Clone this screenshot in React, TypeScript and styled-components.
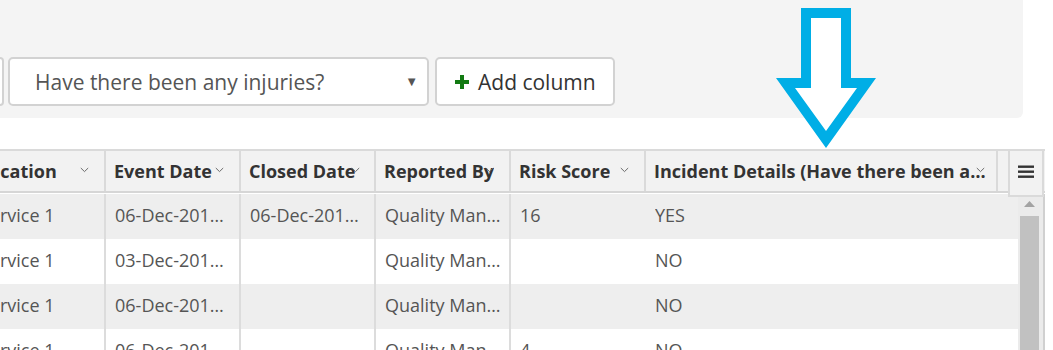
import React from "react";
import styled, { createGlobalStyle } from "styled-components";

const Global = createGlobalStyle`
  html, body { margin: 0; padding: 0; background: #ffffff; }
  body { font-family: "Open Sans", "Liberation Sans", sans-serif; }
  * { box-sizing: border-box; }
`;

const Page = styled.div`
  position: relative;
  width: 1053px;
  height: 350px;
  overflow: hidden;
  background: #ffffff;
`;

const Panel = styled.div`
  width: 1023px;
  height: 118px;
  background: #f4f4f4;
  border-bottom-right-radius: 6px;
  display: flex;
  align-items: flex-end;
  padding-bottom: 12px;
`;

const Toolbar = styled.div`
  display: flex;
  align-items: stretch;
  height: 49px;
`;

const PartialSelect = styled.div`
  width: 4px;
  border: 2px solid #d2d2d2;
  border-left: none;
  border-radius: 0 5px 5px 0;
  background: #ffffff;
  margin-right: 4px;
`;

const Select = styled.div`
  width: 421px;
  background: #ffffff;
  border: 2px solid #d2d2d2;
  border-radius: 5px;
  display: flex;
  align-items: center;
  padding: 0 9px 0 25px;
  font-size: 21px;
  color: #555555;
  margin-right: 6px;
`;

const SelectText = styled.span`
  flex: 1;
  white-space: nowrap;
`;

const Caret = styled.span`
  font-size: 13px;
  color: #555555;
  padding-bottom: 2px;
`;

const AddButton = styled.button`
  width: 180px;
  background: #ffffff;
  border: 2px solid #d2d2d2;
  border-radius: 5px;
  display: flex;
  align-items: center;
  padding: 0 0 0 18px;
  font-family: "Open Sans", "Liberation Sans", sans-serif;
  font-size: 21px;
  color: #333333;
  gap: 9px;
`;

const Grid = styled.div`
  position: relative;
  width: 1045px;
  margin-top: 31px;
  overflow: hidden;
`;

const HeaderRow = styled.div`
  display: flex;
  margin-left: -29px;
  height: 44px;
  background: #f2f2f2;
  border-top: 2px solid #dadada;
  border-bottom: 2px solid #d6d6d6;
`;

const HeadCell = styled.div<{ $w: number }>`
  position: relative;
  flex: 0 0 ${(p) => p.$w}px;
  width: ${(p) => p.$w}px;
  border-right: 2px solid #dadada;
  display: flex;
  align-items: center;
  padding: 0 6px 1px 8px;
  font-size: 18px;
  font-weight: 700;
  color: #333333;
  min-width: 0;
`;

const HeadText = styled.span`
  white-space: nowrap;
  overflow: hidden;
  text-overflow: ellipsis;
`;

const Chevron = styled.svg<{ $r: number }>`
  position: absolute;
  right: ${(p) => p.$r}px;
  top: 16px;
`;

const HeadFiller = styled.div`
  flex: 1;
`;

const MenuButton = styled.div`
  position: absolute;
  top: 0;
  right: 1px;
  width: 36px;
  height: 48px;
  background: #f2f2f2;
  border: 2px solid #dadada;
  display: flex;
  align-items: center;
  justify-content: center;
  padding-bottom: 4px;
`;

const Body = styled.div`
  display: flex;
  padding-top: 1px;
`;

const Rows = styled.div`
  width: 1018px;
  overflow: hidden;
`;

const Row = styled.div<{ $alt: boolean }>`
  display: flex;
  margin-left: -29px;
  height: 45px;
  background: ${(p) => (p.$alt ? "#eeeeee" : "#ffffff")};
`;

const Cell = styled.div<{ $w: number; $line: boolean }>`
  flex: 0 0 ${(p) => p.$w}px;
  width: ${(p) => p.$w}px;
  border-right: 2px solid ${(p) => (p.$line ? "#dcdcdc" : "transparent")};
  display: flex;
  align-items: center;
  padding: 0 6px 4px 9px;
  font-size: 18px;
  color: #555555;
  min-width: 0;
`;

const CellText = styled.span`
  white-space: nowrap;
  overflow: hidden;
  text-overflow: ellipsis;
`;

const Scrollbar = styled.div`
  width: 27px;
  height: 160px;
  display: flex;
  flex-direction: column;
  background: #ebebeb;
  padding: 0 4px 0 2px;
  border-right: 2px solid #d0d0d0;
`;

const ScrollUp = styled.div`
  height: 22px;
  display: flex;
  align-items: center;
  justify-content: center;
  padding-bottom: 2px;
`;

const Thumb = styled.div`
  flex: 1;
  background: #c1c1c1;
`;

const ArrowSvg = styled.svg`
  position: absolute;
  left: 0;
  top: 0;
  pointer-events: none;
`;

type Col = { title: string; w: number; chev: number; line: boolean };

const cols: Col[] = [
  { title: "Location", w: 135, chev: 15, line: true },
  { title: "Event Date", w: 135, chev: 15, line: true },
  { title: "Closed Date", w: 135, chev: 14, line: true },
  { title: "Reported By", w: 135, chev: 15, line: true },
  { title: "Risk Score", w: 135, chev: 15, line: false },
  { title: "Incident Details (Have there been any injuries?)", w: 352, chev: 11, line: false },
];

const rows: string[][] = [
  ["Service 1", "06-Dec-2018 10:15", "06-Dec-2018 16:40", "Quality Manager", "16", "YES"],
  ["Service 1", "03-Dec-2018 09:30", "", "Quality Manager", "", "NO"],
  ["Service 1", "06-Dec-2018 11:05", "", "Quality Manager", "", "NO"],
  ["Service 1", "06-Dec-2018 14:20", "", "Quality Manager", "4", "NO"],
];

const ChevronIcon = ({ r }: { r: number }) => (
  <Chevron $r={r} width="9" height="6" viewBox="0 0 9 6">
    <path d="M0.8 1 L4.5 4.6 L8.2 1" fill="none" stroke="#6a6a6a" strokeWidth="1" />
  </Chevron>
);

export default function App() {
  return (
    <Page>
      <Global />
      <Panel>
        <Toolbar>
          <PartialSelect />
          <Select>
            <SelectText>Have there been any injuries?</SelectText>
            <Caret>▼</Caret>
          </Select>
          <AddButton>
            <svg width="14" height="14" viewBox="0 0 14 14">
              <path d="M5 0 H9 V5 H14 V9 H9 V14 H5 V9 H0 V5 H5 Z" fill="#127a12" />
            </svg>
            Add column
          </AddButton>
        </Toolbar>
      </Panel>
      <Grid>
        <HeaderRow>
          {cols.map((c) => (
            <HeadCell key={c.title} $w={c.w}>
              <HeadText>{c.title}</HeadText>
              <ChevronIcon r={c.chev} />
            </HeadCell>
          ))}
          <HeadFiller />
        </HeaderRow>
        <MenuButton>
          <svg width="16" height="13" viewBox="0 0 16 13">
            <rect x="0" y="0.5" width="16" height="2.4" fill="#333" />
            <rect x="0" y="5.5" width="16" height="2.4" fill="#333" />
            <rect x="0" y="10.5" width="16" height="2.4" fill="#333" />
          </svg>
        </MenuButton>
        <Body>
          <Rows>
            {rows.map((r, i) => (
              <Row key={i} $alt={i % 2 === 0}>
                {r.map((v, j) => (
                  <Cell key={j} $w={cols[j].w} $line={cols[j].line}>
                    <CellText>{v}</CellText>
                  </Cell>
                ))}
              </Row>
            ))}
          </Rows>
          <Scrollbar>
            <ScrollUp>
              <svg width="11" height="6" viewBox="0 0 11 6">
                <path d="M0 6 L5.5 0 L11 6 Z" fill="#a3a3a3" />
              </svg>
            </ScrollUp>
            <Thumb />
          </Scrollbar>
        </Body>
      </Grid>
      <ArrowSvg width="1053" height="350" viewBox="0 0 1053 350">
        <path d="M801 8 H851 V78 H876 L826 148 L776 78 H801 Z" fill="#00aee6" />
        <path d="M811 18 H841 V88 H857 L826 131 L795 88 H811 Z" fill="#ffffff" />
      </ArrowSvg>
    </Page>
  );
}
